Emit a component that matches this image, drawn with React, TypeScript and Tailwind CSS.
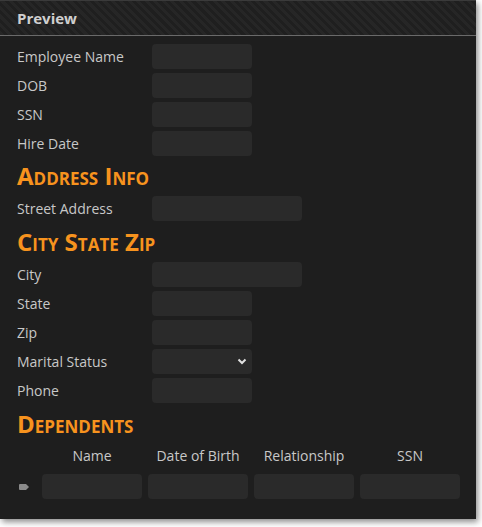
import React from "react";

const fieldCls = "h-[25px] rounded-[4px] bg-[#2a2a2a]";

const Row = ({ label, wide, select }: { label: string; wide?: boolean; select?: boolean }) => (
  <div className="flex items-center">
    <div className="w-[135px] text-[14px] text-[#c8c8c8]">{label}</div>
    <div className={`${fieldCls} ${wide ? "w-[150px]" : "w-[100px]"} relative`}>
      {select && (
        <svg className="absolute right-[5px] top-[9px]" width="10" height="7" viewBox="0 0 10 7">
          <path d="M1.5 1.5 L5 5 L8.5 1.5" fill="none" stroke="#e0e0e0" strokeWidth="2" />
        </svg>
      )}
    </div>
  </div>
);

const Heading = ({ children, extra }: { children: React.ReactNode; extra?: string }) => (
  <div className={`h-[32px] flex items-center text-[24px] font-bold text-[#f7931e] [font-variant:small-caps] leading-none ${extra ?? ""}`}>
    {children}
  </div>
);

const App: React.FC = () => {
  return (
    <div className="w-[482px] h-[527px] bg-white font-['Open_Sans',sans-serif]">
      <div className="w-[476px] h-[519px] bg-[#1e1e1e] border-t border-[#3a3a3a] shadow-[2px_3px_6px_rgba(0,0,0,0.45)]">
        <div className="h-[35px] border-b border-[#6a6a6a] bg-[repeating-linear-gradient(45deg,#262626_0px,#262626_3px,#1f1f1f_3px,#1f1f1f_6px)] flex items-center px-[17px]">
          <span className="text-[15px] font-bold text-[#cfcfcf]">Preview</span>
        </div>
        <div className="px-[17px] pt-[8px] flex flex-col gap-[4px]">
          <Row label="Employee Name" />
          <Row label="DOB" />
          <Row label="SSN" />
          <Row label="Hire Date" />
          <Heading>Address Info</Heading>
          <Row label="Street Address" wide />
          <Heading extra="mt-[1px]">City State Zip</Heading>
          <Row label="City" wide />
          <Row label="State" />
          <Row label="Zip" />
          <Row label="Marital Status" select />
          <Row label="Phone" />
          <Heading extra="mt-[1px]">Dependents</Heading>
        </div>
        <div className="pl-[6px] mt-[4px]">
          <div className="flex gap-[6px] pl-[36px] h-[22px] items-center text-[14px] text-[#c8c8c8]">
            <div className="w-[100px] text-center">Name</div>
            <div className="w-[100px] text-center">Date of Birth</div>
            <div className="w-[100px] text-center">Relationship</div>
            <div className="w-[100px] text-center">SSN</div>
          </div>
          <div className="flex items-center mt-[8px]">
            <div className="w-[36px] flex justify-center">
              <svg width="10" height="6" viewBox="0 0 10 6">
                <path d="M0 1 Q0 0 1 0 L7 0 L10 3 L7 6 L1 6 Q0 6 0 5 Z" fill="#8a8a8a" />
              </svg>
            </div>
            <div className="flex gap-[6px]">
              <div className={`${fieldCls} w-[100px]`} />
              <div className={`${fieldCls} w-[100px]`} />
              <div className={`${fieldCls} w-[100px]`} />
              <div className={`${fieldCls} w-[100px]`} />
            </div>
          </div>
        </div>
      </div>
    </div>
  );
};

export default App;
